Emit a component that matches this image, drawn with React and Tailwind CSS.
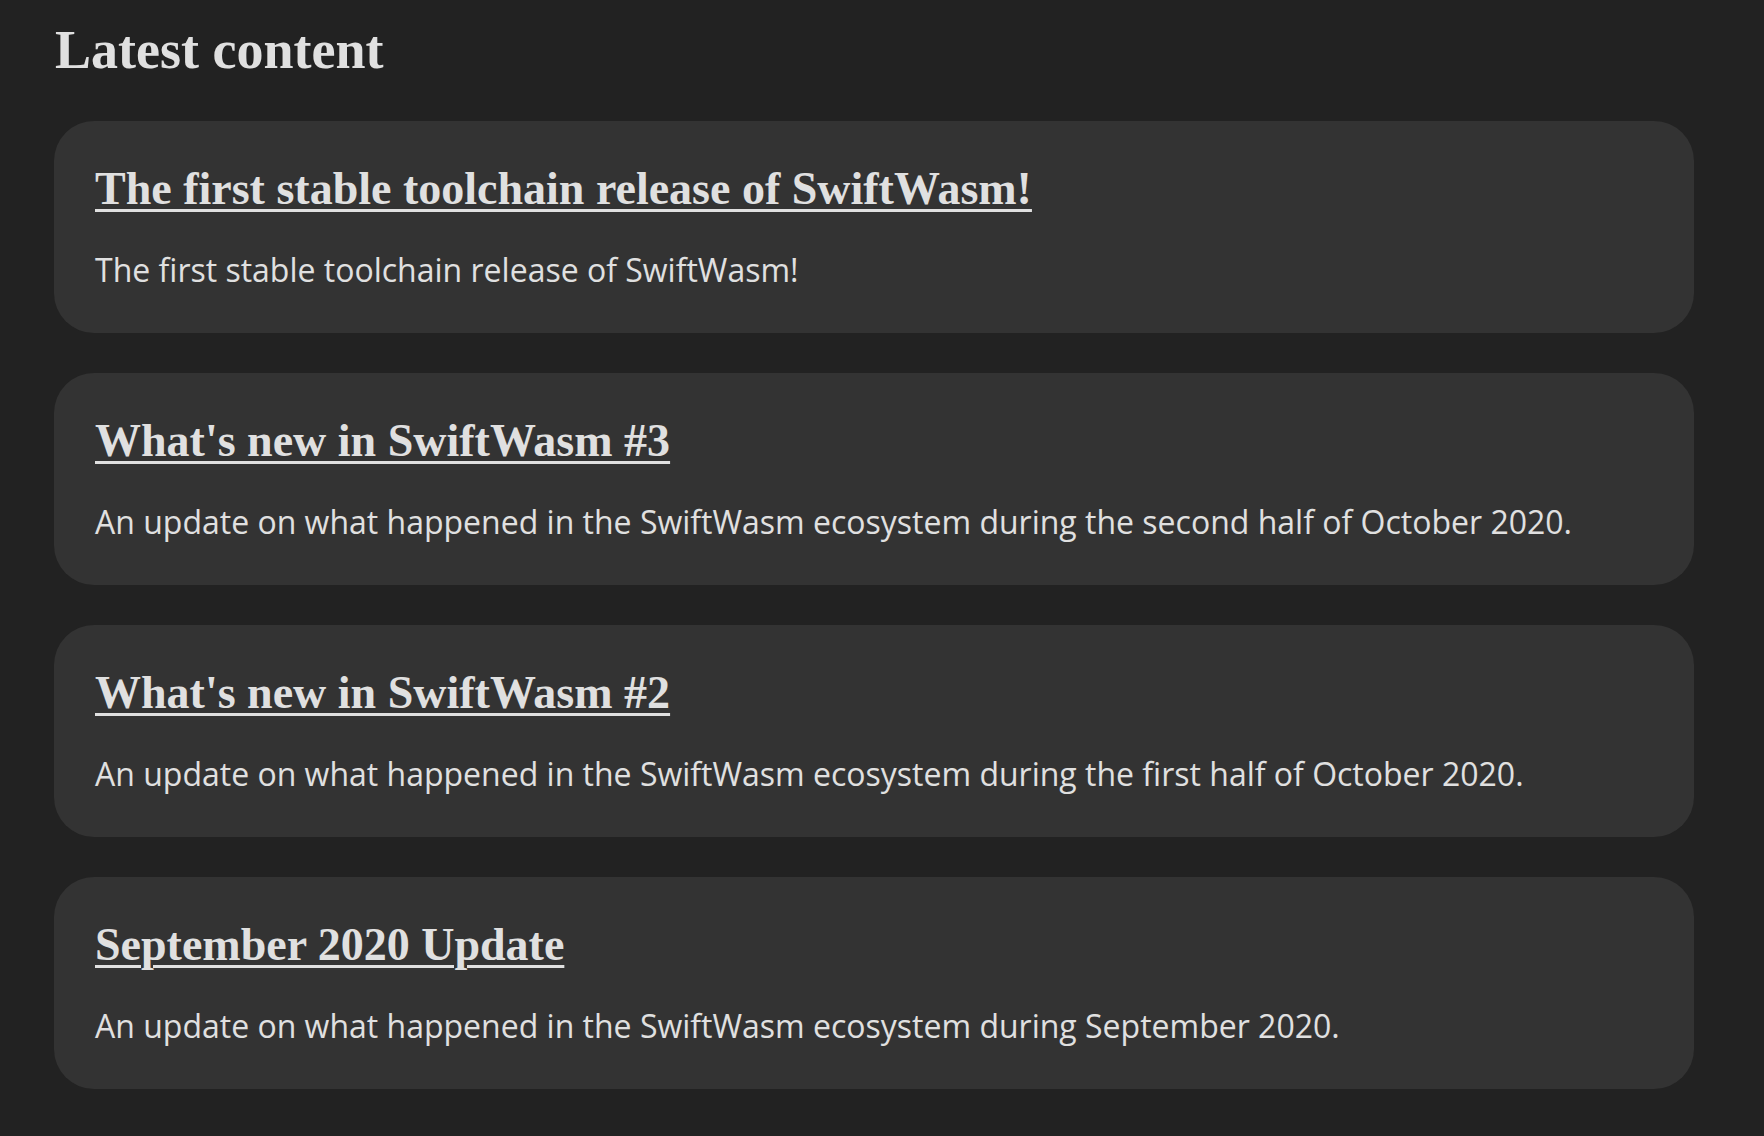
const posts = [
  {
    id: 'stable-toolchain',
    title: 'The first stable toolchain release of SwiftWasm!',
    description: 'The first stable toolchain release of SwiftWasm!',
  },
  {
    id: 'whats-new-3',
    title: "What's new in SwiftWasm #3",
    description:
      'An update on what happened in the SwiftWasm ecosystem during the second half of October 2020.',
  },
  {
    id: 'whats-new-2',
    title: "What's new in SwiftWasm #2",
    description:
      'An update on what happened in the SwiftWasm ecosystem during the first half of October 2020.',
  },
  {
    id: 'september-2020',
    title: 'September 2020 Update',
    description:
      'An update on what happened in the SwiftWasm ecosystem during September 2020.',
  },
];

const serif = { fontFamily: '"Liberation Serif", "DejaVu Serif", serif' };
const sans = { fontFamily: '"Open Sans", "Noto Sans", sans-serif' };

const PostCard = ({ post }) => (
  <div className="w-[1640px] rounded-[40px] bg-[#333333] px-[41px] pt-[41px] pb-[40px]">
    <h2
      className="text-[46px] leading-[54px] font-bold text-[#e0e0e0]"
      style={serif}
    >
      <a
        href="#"
        className="underline decoration-[2.5px] underline-offset-[5px]"
      >
        {post.title}
      </a>
    </h2>
    <p
      className="mt-[31px] mb-[1px] text-[32px] leading-[45px] text-[#e0e0e0]"
      style={sans}
    >
      {post.description}
    </p>
  </div>
);

export default function App() {
  return (
    <div className="min-h-[1136px] w-full bg-[#222222] pl-[54px] pt-[19px] pb-[47px]">
      {/* Section heading */}
      <h1
        className="pl-[1px] text-[54px] leading-[62px] font-bold text-[#e0e0e0]"
        style={serif}
      >
        Latest content
      </h1>

      {/* Posts list */}
      <div className="mt-[40px] flex flex-col gap-[40px]">
        {posts.map((post) => (
          <PostCard key={post.id} post={post} />
        ))}
      </div>
    </div>
  );
}
